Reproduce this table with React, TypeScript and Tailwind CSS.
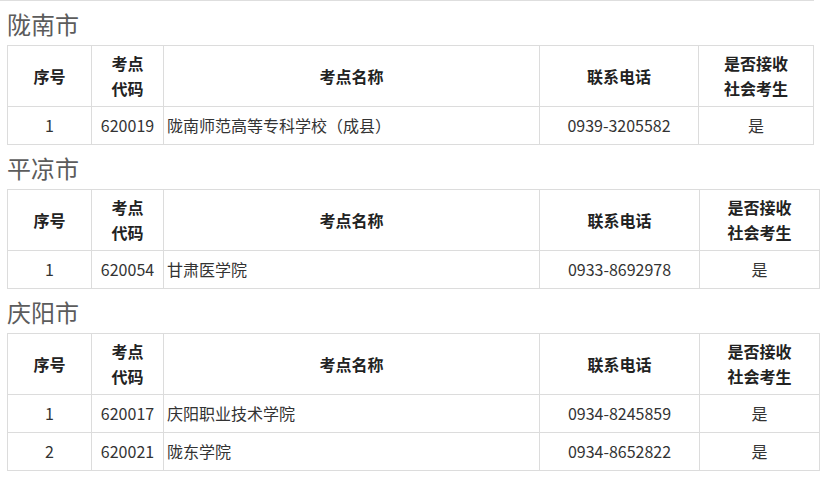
const sections = [
  {
    city: "陇南市",
    wide: false,
    rows: [{ no: "1", code: "620019", name: "陇南师范高等专科学校（成县）", tel: "0939-3205582", ok: "是" }],
  },
  {
    city: "平凉市",
    wide: true,
    rows: [{ no: "1", code: "620054", name: "甘肃医学院", tel: "0933-8692978", ok: "是" }],
  },
  {
    city: "庆阳市",
    wide: true,
    rows: [
      { no: "1", code: "620017", name: "庆阳职业技术学院", tel: "0934-8245859", ok: "是" },
      { no: "2", code: "620021", name: "陇东学院", tel: "0934-8652822", ok: "是" },
    ],
  },
];

const th = "border border-[#dcdcdc] px-1 py-0 text-center align-middle font-bold text-[16px] leading-[25px] text-[#222]";
const td = "border border-[#dcdcdc] px-0 py-0 text-center align-middle text-[16px] leading-[25px] text-[#333]";

export default function App() {
  return (
    <div className="w-[831px] h-[480px] bg-white overflow-hidden" style={{ fontFamily: '"Noto Sans CJK SC", "Noto Sans", sans-serif' }}>
      <div className="w-[814px] h-[1px] bg-[#dedede]" />
      <div className="pl-[7px]">
        {sections.map((s) => (
          <div key={s.city}>
            <h2 className="h-[44px] pt-[6px] text-[24px] leading-[34px] text-[#5c5c5c] font-normal">{s.city}</h2>
            <table className={`border-collapse table-fixed ${s.wide ? "w-[813px]" : "w-[807px]"}`}>
              <colgroup>
                <col className="w-[84px]" />
                <col className="w-[72px]" />
                <col className="w-[376px]" />
                <col className={s.wide ? "w-[160px]" : "w-[159px]"} />
                <col />
              </colgroup>
              <thead>
                <tr className="h-[61px]">
                  <th className={th}>序号</th>
                  <th className={th}>
                    考点
                    <br />
                    代码
                  </th>
                  <th className={th}>考点名称</th>
                  <th className={th}>联系电话</th>
                  <th className={th}>
                    是否接收
                    <br />
                    社会考生
                  </th>
                </tr>
              </thead>
              <tbody>
                {s.rows.map((r) => (
                  <tr key={r.code} className="h-[38px]">
                    <td className={td}>{r.no}</td>
                    <td className={td}>{r.code}</td>
                    <td className={`${td} !text-left pl-[3px]`}>{r.name}</td>
                    <td className={td}>{r.tel}</td>
                    <td className={td}>{r.ok}</td>
                  </tr>
                ))}
              </tbody>
            </table>
          </div>
        ))}
      </div>
    </div>
  );
}
